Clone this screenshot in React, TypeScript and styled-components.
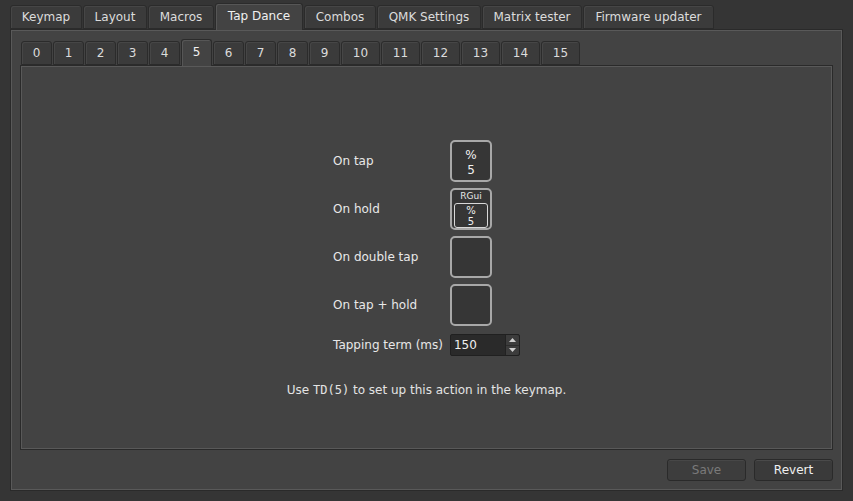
import React, {useState} from 'react';
import styled, {createGlobalStyle} from 'styled-components';

const GlobalStyle = createGlobalStyle`
  html, body {
    margin: 0;
    padding: 0;
    background: #353535;
  }
  body {
    font-family: "DejaVu Sans", "Liberation Sans", sans-serif;
    font-size: 12px;
    color: #e4e4e4;
  }
`;

const Window = styled.div`
  width: 853px;
  height: 501px;
  box-sizing: border-box;
  padding: 3px 10px 0 10px;
  background: #353535;
  display: flex;
  flex-direction: column;
`;

const TabBar = styled.div<{ $inner?: boolean }>`
  display: flex;
  align-items: flex-end;
  gap: 1px;
  height: 26px;
  flex-shrink: 0;
  padding-left: ${p => p.$inner ? '1px' : '0'};
  position: relative;
  z-index: 1;
`;

const Tab = styled.div<{ $active?: boolean; $w: number }>`
  box-sizing: border-box;
  width: ${p => p.$w}px;
  height: ${p => p.$active ? '27px' : '24px'};
  margin-bottom: ${p => p.$active ? '-1px' : '0'};
  display: flex;
  align-items: center;
  justify-content: center;
  padding-bottom: ${p => p.$active ? '2px' : '0'};
  border: 1px solid #2b2b2b;
  border-bottom: ${p => p.$active ? 'none' : '1px solid #2b2b2b'};
  border-radius: 3px 3px 0 0;
  background: ${p => p.$active ? '#434343' : '#3b3b3b'};
  box-shadow: inset 1px 1px 0 ${p => p.$active ? '#565656' : '#464646'};
  color: ${p => p.$active ? '#f0f0f0' : '#dcdcdc'};
  white-space: nowrap;
  cursor: default;
`;

const Pane = styled.div`
  box-sizing: border-box;
  border: 1px solid #2a2a2a;
  box-shadow: inset 1px 1px 0 #595959, inset -1px -1px 0 #595959;
  background: #434343;
  display: flex;
  flex-direction: column;
`;

const OuterPane = styled(Pane)`
  height: 462px;
  padding: 9px 9px 0 9px;
`;

const InnerPane = styled(Pane)`
  height: 385px;
  flex-shrink: 0;
  align-items: center;
  justify-content: center;
  padding-top: 22px;
`;

const Form = styled.div`
  display: grid;
  grid-template-columns: auto auto;
  column-gap: 7px;
  row-gap: 6px;
  align-items: center;
`;

const Label = styled.div`
  color: #e8e8e8;
  line-height: 14px;
`;

const KeyBox = styled.div<{ $small?: boolean }>`
  box-sizing: border-box;
  width: ${p => p.$small ? '34px' : '42px'};
  height: ${p => p.$small ? '25px' : '42px'};
  border: ${p => p.$small ? '1px solid #d8d8d8' : '2px solid #a8a8a8'};
  border-radius: ${p => p.$small ? '3px' : '5px'};
  background: #363636;
  display: flex;
  flex-direction: column;
  align-items: center;
  justify-content: center;
  padding-top: ${p => p.$small ? '0' : '3px'};
  font-size: ${p => p.$small ? '10px' : '12px'};
  line-height: ${p => p.$small ? '11px' : '15px'};
  color: #f0f0f0;
`;

const HoldKey = styled(KeyBox)`
  justify-content: flex-start;
  padding-top: 1px;
  gap: 1px;
`;

const Modifier = styled.div`
  font-size: 9px;
  line-height: 11px;
  color: #e6e6e6;
`;

const SpinRow = styled.div`
  margin-top: 2px;
`;

const SpinBox = styled.div`
  box-sizing: border-box;
  width: 70px;
  height: 22px;
  border: 1px solid #202020;
  border-radius: 2px;
  background: #2a2a2a;
  display: flex;
  align-items: stretch;
`;

const SpinValue = styled.div`
  flex: 1;
  display: flex;
  align-items: center;
  padding-left: 3px;
  color: #f0f0f0;
`;

const SpinButtons = styled.div`
  width: 13px;
  display: flex;
  flex-direction: column;
  background: #3c3c3c;
  border-left: 1px solid #222;
  border-radius: 0 2px 2px 0;
`;

const SpinButton = styled.div`
  flex: 1;
  display: flex;
  align-items: center;
  justify-content: center;
  & + & {
    border-top: 1px solid #2c2c2c;
  }
`;

const Hint = styled.div`
  margin-top: 27px;
  color: #e4e4e4;
`;

const Mono = styled.span`
  font-family: "DejaVu Sans Mono", "Liberation Mono", monospace;
`;

const Footer = styled.div`
  display: flex;
  justify-content: flex-end;
  gap: 8px;
  padding: 9px 0 0 0;
`;

const Button = styled.button<{ $disabled?: boolean }>`
  box-sizing: border-box;
  width: 79px;
  height: 22px;
  border: 1px solid #2a2a2a;
  border-radius: 3px;
  background: ${p => p.$disabled ? '#3d3d3d' : '#3a3a3a'};
  box-shadow: inset 0 1px 0 ${p => p.$disabled ? '#474747' : '#4a4a4a'};
  color: ${p => p.$disabled ? '#7a7a7a' : '#f0f0f0'};
  font-family: "DejaVu Sans", sans-serif;
  font-size: 12px;
  padding: 0;
`;

const Arrow = ({up}: { up?: boolean }) => (
    <svg width="7" height="4" viewBox="0 0 7 4">
        <polygon points={up ? '0,4 3.5,0 7,4' : '0,0 3.5,4 7,0'} fill="#cfcfcf"/>
    </svg>
);

const mainTabs = [
    {name: 'Keymap', w: 72},
    {name: 'Layout', w: 64},
    {name: 'Macros', w: 66},
    {name: 'Tap Dance', w: 88},
    {name: 'Combos', w: 72},
    {name: 'QMK Settings', w: 104},
    {name: 'Matrix tester', w: 100},
    {name: 'Firmware updater', w: 131},
];

const danceTabs = Array.from({length: 16}, (_, i) => i);

export default function App() {
    const [mainTab, setMainTab] = useState('Tap Dance');
    const [dance, setDance] = useState(5);

    return (
        <>
            <GlobalStyle/>
            <Window>
                <TabBar>
                    {mainTabs.map(t => (
                        <Tab key={t.name} $w={t.w} $active={t.name === mainTab}
                             onClick={() => setMainTab(t.name)}>
                            {t.name}
                        </Tab>
                    ))}
                </TabBar>
                <OuterPane>
                    <TabBar $inner>
                        {danceTabs.map(i => (
                            <Tab key={i} $w={i >= 10 ? 39 : 31} $active={i === dance}
                                 onClick={() => setDance(i)}>
                                {i}
                            </Tab>
                        ))}
                    </TabBar>
                    <InnerPane>
                        <Form>
                            <Label>On tap</Label>
                            <KeyBox>
                                <div>%</div>
                                <div>5</div>
                            </KeyBox>

                            <Label>On hold</Label>
                            <HoldKey>
                                <Modifier>RGui</Modifier>
                                <KeyBox $small>
                                    <div>%</div>
                                    <div>5</div>
                                </KeyBox>
                            </HoldKey>

                            <Label>On double tap</Label>
                            <KeyBox/>

                            <Label>On tap + hold</Label>
                            <KeyBox/>

                            <SpinRow><Label>Tapping term (ms)</Label></SpinRow>
                            <SpinRow>
                                <SpinBox>
                                    <SpinValue>150</SpinValue>
                                    <SpinButtons>
                                        <SpinButton><Arrow up/></SpinButton>
                                        <SpinButton><Arrow/></SpinButton>
                                    </SpinButtons>
                                </SpinBox>
                            </SpinRow>
                        </Form>
                        <Hint>Use <Mono>TD({dance})</Mono> to set up this action in the keymap.</Hint>
                    </InnerPane>
                    <Footer>
                        <Button $disabled>Save</Button>
                        <Button>Revert</Button>
                    </Footer>
                </OuterPane>
            </Window>
        </>
    );
}
